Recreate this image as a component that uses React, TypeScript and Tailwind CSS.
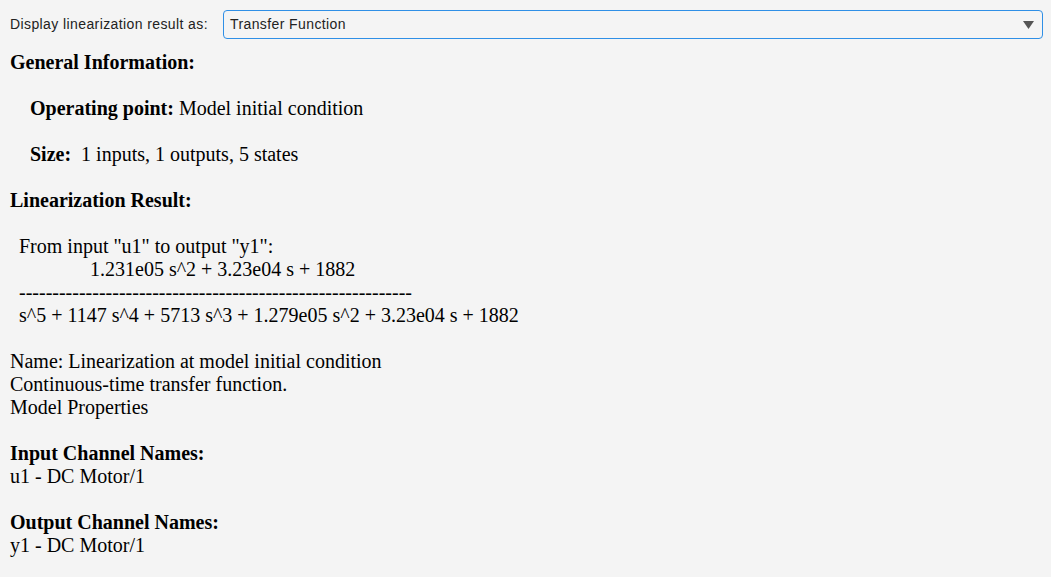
const Line = ({ children, className = '' }: { children?: React.ReactNode; className?: string }) => (
  <div className={`h-[23px] leading-[23px] whitespace-pre ${className}`}>{children}</div>
);

const App = () => {
  return (
    <div className="min-h-screen w-[1051px] bg-[#f4f4f4] text-black">
      <div className="flex items-center pt-[10px] pl-[10px] pr-[8px] font-['Liberation_Sans',Arial,sans-serif] text-[14px] tracking-[0.4px] text-[#222]">
        <span className="mr-[15px]">Display linearization result as:</span>
        <div className="flex-1 h-[29px] flex items-center justify-between border border-[#2f8fe6] rounded-[4px] pl-[6px] pr-[8px]">
          <span>Transfer Function</span>
          <svg width="11" height="8" viewBox="0 0 11 8">
            <path d="M0 0 H11 L5.5 8 Z" fill="#555" />
          </svg>
        </div>
      </div>

      <div className="pt-[12px] pl-[10px] font-['Liberation_Serif','Times_New_Roman',serif] text-[20px]">
        <Line className="font-bold">General Information:</Line>
        <Line />
        <Line className="pl-[20px]">
          <b>Operating point:</b> Model initial condition
        </Line>
        <Line />
        <Line className="pl-[20px]">
          <b>Size:</b>  1 inputs, 1 outputs, 5 states
        </Line>
        <Line />
        <Line className="font-bold">Linearization Result:</Line>
        <Line />
        <Line className="pl-[9px]">From input "u1" to output "y1":</Line>
        <Line className="pl-[80px]">1.231e05 s^2 + 3.23e04 s + 1882</Line>
        <Line className="pl-[9px]">-----------------------------------------------------------</Line>
        <Line className="pl-[9px]">s^5 + 1147 s^4 + 5713 s^3 + 1.279e05 s^2 + 3.23e04 s + 1882</Line>
        <Line />
        <Line>Name: Linearization at model initial condition</Line>
        <Line>Continuous-time transfer function.</Line>
        <Line>Model Properties</Line>
        <Line />
        <Line className="font-bold">Input Channel Names:</Line>
        <Line>u1 - DC Motor/1</Line>
        <Line />
        <Line className="font-bold">Output Channel Names:</Line>
        <Line>y1 - DC Motor/1</Line>
      </div>
    </div>
  );
};

export default App;
